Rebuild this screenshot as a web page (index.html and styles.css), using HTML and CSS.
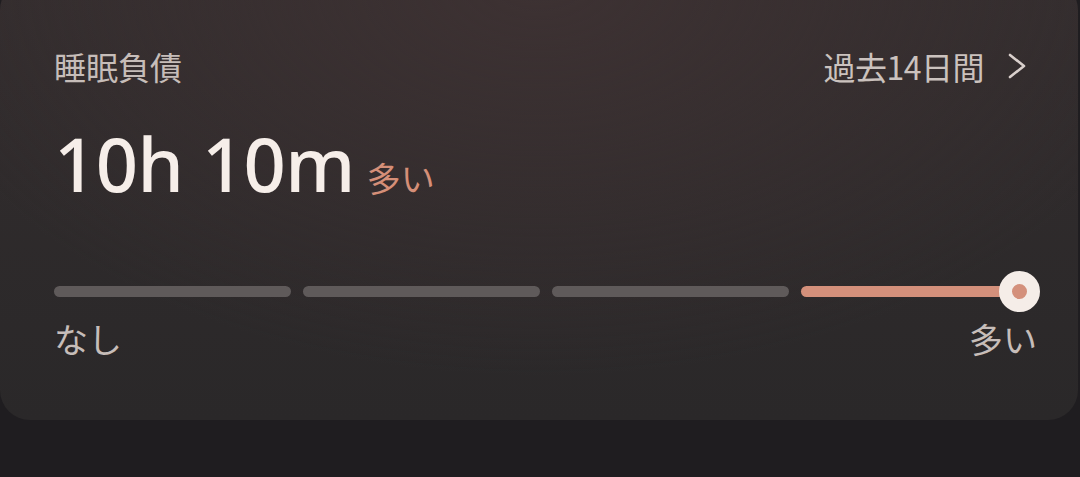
FILE: index.html
```html
<!DOCTYPE html>
<html lang="ja">
<head>
  <meta charset="UTF-8">
  <meta name="viewport" content="width=device-width, initial-scale=1.0">
  <title>睡眠負債</title>
  <link rel="stylesheet" href="styles.css">
</head>
<body>
  <div class="debt-card">
    <div class="card-header">
      <span class="card-title">睡眠負債</span>
      <a class="period-link" href="#">
        <span>過去14日間</span>
        <svg class="chevron" width="24" height="28" viewBox="0 0 24 28">
          <path d="M6 3 L20 14 L6 25" fill="none" stroke="#d9d0cc" stroke-width="2.6" stroke-linecap="round" stroke-linejoin="round"/>
        </svg>
      </a>
    </div>

    <div class="debt-value">
      <span class="amount">10h 10m</span>
      <span class="level">多い</span>
    </div>

    <div class="scale">
      <div class="segments">
        <div class="segment"></div>
        <div class="segment"></div>
        <div class="segment"></div>
        <div class="segment active"></div>
      </div>
      <div class="knob"></div>
    </div>

    <div class="scale-labels">
      <span>なし</span>
      <span>多い</span>
    </div>
  </div>
</body>
</html>
```

FILE: styles.css
```css
body {
  margin: 0;
  padding: 0;
  background-color: #1f1d20;
  font-family: "Noto Sans CJK JP", "Noto Sans", sans-serif;
  height: 477px;
  overflow: hidden;
}

.debt-card {
  margin: -20px 2px 0 0;
  padding: 64px 38px 58px 54px;
  border-radius: 30px;
  background:
    radial-gradient(ellipse 60% 90% at 50% 0%, rgba(62, 50, 51, 0.9), rgba(62, 50, 51, 0) 100%),
    linear-gradient(to bottom, #332d2e, #2a2829);
}

.card-header {
  display: flex;
  justify-content: space-between;
  align-items: center;
  font-size: 32px;
  line-height: 1.4;
  color: #c6bdb9;
}

.period-link {
  display: flex;
  align-items: center;
  color: #cbc2be;
  text-decoration: none;
  letter-spacing: -0.5px;
}

.chevron {
  margin-left: 20px;
  margin-right: 12px;
}

.debt-value {
  display: flex;
  align-items: baseline;
  gap: 12px;
  margin-top: 38px;
}

.amount {
  font-family: "Noto Sans", sans-serif;
  font-size: 74px;
  font-weight: 500;
  line-height: 1;
  letter-spacing: -0.6px;
  color: #f6eee9;
}

.level {
  font-size: 34px;
  color: #d58f78;
}

.scale {
  position: relative;
  margin-top: 69px;
  height: 41px;
  display: flex;
  align-items: center;
}

.segments {
  display: flex;
  gap: 12px;
  width: 100%;
  padding-right: 2px;
}

.segment {
  flex: 1;
  height: 11px;
  border-radius: 6px;
  background-color: #5f5a5a;
}

.segment.active {
  background-color: #d4907b;
}

.knob {
  position: absolute;
  right: 0;
  top: 0;
  width: 15px;
  height: 15px;
  border: 13px solid #f5ede8;
  border-radius: 50%;
  background-color: #d4907b;
}

.scale-labels {
  display: flex;
  justify-content: space-between;
  margin-top: 3px;
  padding-right: 3px;
  font-size: 34px;
  line-height: 1.4;
  color: #c6bdb9;
}
```
